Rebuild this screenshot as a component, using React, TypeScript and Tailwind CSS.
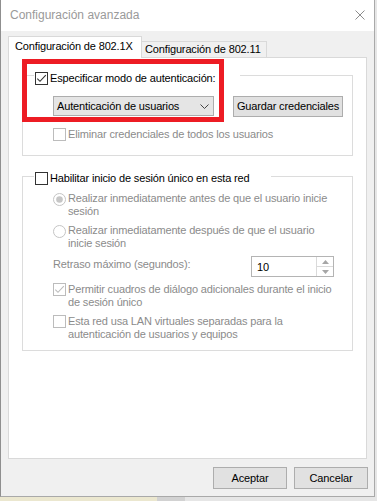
import React from "react";

function Box({ checked = false, disabled = false }: { checked?: boolean; disabled?: boolean }) {
  const c = disabled ? "#bcbcbc" : "#333333";
  return (
    <svg width="13" height="13" viewBox="0 0 13 13" className="shrink-0">
      <rect x="0.5" y="0.5" width="12" height="12" fill="#ffffff" stroke={c} />
      {checked && (
        <path d="M2.3 6.6 L5 9.3 L10.8 3.2" fill="none" stroke={c} strokeWidth="1.1" />
      )}
    </svg>
  );
}

function Radio({ selected = false }: { selected?: boolean }) {
  return (
    <svg width="13" height="13" viewBox="0 0 13 13" className="shrink-0">
      <circle cx="6.5" cy="6.5" r="6" fill="#ffffff" stroke="#c4c4c4" />
      {selected && <circle cx="6.5" cy="6.5" r="3.3" fill="#c6c6c6" />}
    </svg>
  );
}

export default function App() {
  return (
    <div className="relative w-[377px] h-[501px] overflow-hidden bg-[#e6e6e6] font-['Liberation_Sans','Arial',sans-serif] text-[11px] tracking-[-0.15px] text-black">
      <div className="flex flex-col w-[375px] h-[497px] border-l border-r border-b border-l-[#8f8f8f] border-r-[#a9a9a9] border-b-[#a9a9a9] bg-[#f0f0f0]">
        {/* Title bar */}
        <div className="h-[31px] shrink-0 bg-white flex items-center justify-between pl-[9px] pr-[9px] pb-[1px]">
          <span className="text-[12px] tracking-normal text-[#9a9a9a]">Configuración avanzada</span>
          <svg width="10" height="10" viewBox="0 0 10 10">
            <path d="M0.5 0.5 L9.5 9.5 M9.5 0.5 L0.5 9.5" stroke="#8c8c8c" strokeWidth="1" fill="none" />
          </svg>
        </div>

        {/* Body */}
        <div className="flex-1 flex flex-col px-[7px] pt-[5px]">
          {/* Tabs */}
          <div className="flex items-end h-[22px]">
            <div className="relative z-10 w-[134px] h-[22px] bg-white border border-b-0 border-[#d9d9d9] flex items-center pl-[6px] pb-[2px]">
              Configuración de 802.1X
            </div>
            <div className="w-[125px] h-[17px] bg-[#f0f0f0] border-t border-r border-[#d9d9d9] flex items-center pl-[3px] pb-[1px]">
              Configuración de 802.11
            </div>
          </div>

          {/* Panel */}
          <div className="-mt-px h-[402px] bg-white border border-[#d9d9d9] flex flex-col pl-[13px] pt-[17px]">
            {/* Group 1 */}
            <div className="w-[331px] h-[81px] shrink-0 border border-[#dcdcdc] flex flex-col">
              <div className="-mt-[6px] ml-[11px] w-[206px] h-[16px] bg-white flex items-center gap-[2px] pl-px">
                <Box checked />
                <span>Especificar modo de autenticación:</span>
              </div>
              <div className="mt-[10px] ml-[30px] flex items-start">
                <div className="w-[161px] h-[20px] bg-[#e5e5e5] border border-[#adadad] flex items-center justify-between pl-[3px] pr-[4px]">
                  <span>Autenticación de usuarios</span>
                  <svg width="9" height="5" viewBox="0 0 9 5">
                    <path d="M0.5 0.5 L4.5 4.5 L8.5 0.5" stroke="#444" strokeWidth="1" fill="none" />
                  </svg>
                </div>
                <div className="ml-[19px] w-[110px] h-[21px] bg-[#e1e1e1] border border-[#adadad] flex items-center justify-center">
                  Guardar credenciales
                </div>
              </div>
              <div className="mt-[9px] ml-[30px] h-[16px] flex items-center gap-[2px] text-[#8b8b8b]">
                <Box disabled />
                <span>Eliminar credenciales de todos los usuarios</span>
              </div>
            </div>

            {/* Group 2 */}
            <div className="mt-[20px] w-[331px] h-[175px] shrink-0 border border-[#dcdcdc] flex flex-col">
              <div className="-mt-[7px] ml-[11px] w-[237px] h-[16px] bg-white flex items-center gap-[2px] pl-px">
                <Box />
                <span>Habilitar inicio de sesión único en esta red</span>
              </div>
              <div className="mt-[6px] ml-[30px] flex items-start gap-[2px] text-[#8b8b8b] leading-[13px]">
                <div className="mt-[1px]">
                  <Radio selected />
                </div>
                <span className="whitespace-nowrap">
                  Realizar inmediatamente antes de que el usuario inicie
                  <br />
                  sesión
                </span>
              </div>
              <div className="mt-[6px] ml-[30px] flex items-start gap-[2px] text-[#8b8b8b] leading-[13px]">
                <div className="mt-[1px]">
                  <Radio />
                </div>
                <span className="whitespace-nowrap">
                  Realizar inmediatamente después de que el usuario
                  <br />
                  inicie sesión
                </span>
              </div>
              <div className="mt-[6px] ml-[30px] flex items-start">
                <span className="w-[198px] h-[16px] leading-[16px] text-[#8b8b8b]">Retraso máximo (segundos):</span>
                <div className="w-[83px] h-[21px] border border-[#b4b4b4] bg-white flex">
                  <div className="flex-1 flex items-center pl-[5px] pt-[1px]">10</div>
                  <div className="w-[17px] border-l border-[#dadada] flex flex-col">
                    <div className="flex-1 flex items-center justify-center border-b border-[#dadada]">
                      <svg width="7" height="4" viewBox="0 0 7 4">
                        <path d="M0 4 L3.5 0 L7 4 Z" fill="#a6a6a6" />
                      </svg>
                    </div>
                    <div className="flex-1 flex items-center justify-center">
                      <svg width="7" height="4" viewBox="0 0 7 4">
                        <path d="M0 0 L3.5 4 L7 0 Z" fill="#a6a6a6" />
                      </svg>
                    </div>
                  </div>
                </div>
              </div>
              <div className="mt-[6px] ml-[30px] flex items-start gap-[2px] text-[#8b8b8b] leading-[13px]">
                <Box checked disabled />
                <span className="whitespace-nowrap">
                  Permitir cuadros de diálogo adicionales durante el inicio
                  <br />
                  de sesión único
                </span>
              </div>
              <div className="mt-[6px] ml-[30px] flex items-start gap-[2px] text-[#8b8b8b] leading-[13px]">
                <Box disabled />
                <span className="whitespace-nowrap">
                  Esta red usa LAN virtuales separadas para la
                  <br />
                  autenticación de usuarios y equipos
                </span>
              </div>
            </div>
          </div>

          {/* Bottom buttons */}
          <div className="mt-[8px] -mr-px flex justify-end gap-[7px]">
            <div className="w-[74px] h-[22px] bg-[#e1e1e1] border border-[#adadad] flex items-center justify-center">
              Aceptar
            </div>
            <div className="w-[74px] h-[22px] bg-[#e1e1e1] border border-[#adadad] flex items-center justify-center">
              Cancelar
            </div>
          </div>
        </div>
      </div>
      <div className="flex h-[4px]">
        <div className="w-[157px] bg-[#ebe7cf]" />
        <div className="w-[28px] bg-[#d2d2d2]" />
      </div>

      {/* Red annotation rectangle */}
      <div className="absolute left-[22px] top-[59px] w-[202px] h-[63px] border-[5px] border-[#ed1c24] pointer-events-none" />
    </div>
  );
}
